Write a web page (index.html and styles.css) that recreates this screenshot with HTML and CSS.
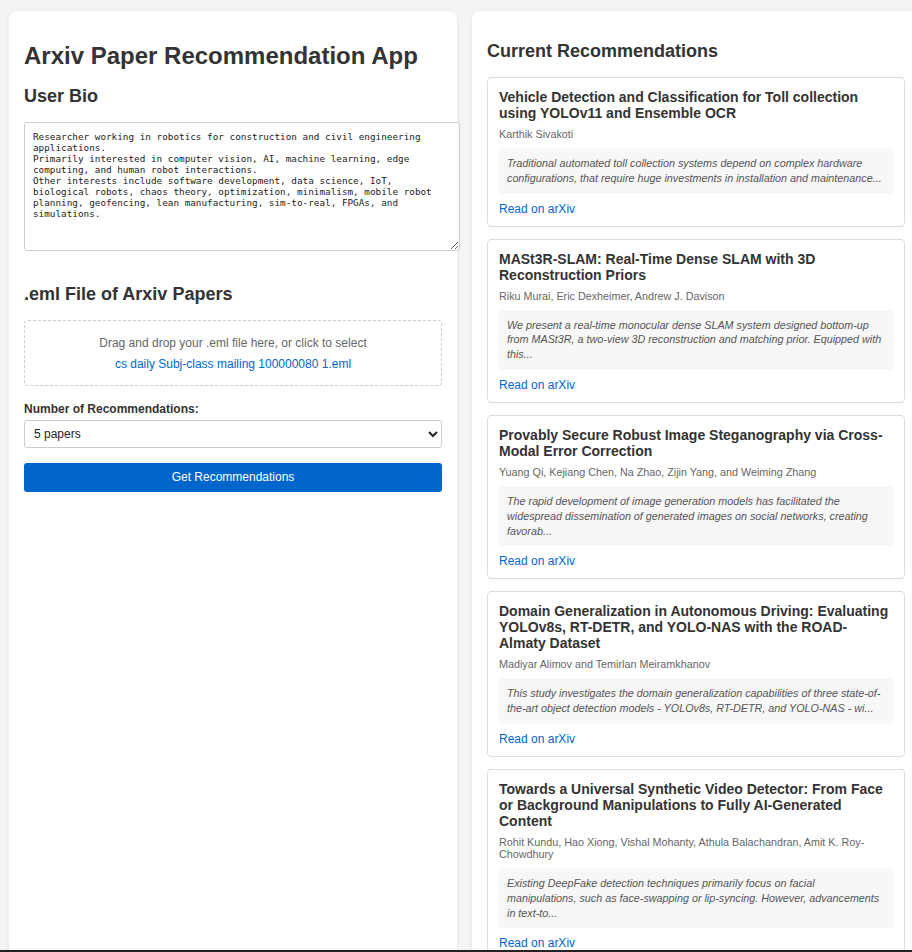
FILE: index.html
```html
<!DOCTYPE html>
<html lang="en">
<head>
<meta charset="utf-8">
<title>Arxiv Paper Recommendation App</title>
<link rel="stylesheet" href="styles.css">
</head>
<body>
<div class="app">
  <section class="panel">
    <h1 class="app-title">Arxiv Paper Recommendation App</h1>
    <h2 class="section-title">User Bio</h2>
    <textarea class="bio" spellcheck="false">Researcher working in robotics for construction and civil engineering applications.
Primarily interested in computer vision, AI, machine learning, edge computing, and human robot interactions.
Other interests include software development, data science, IoT, biological robots, chaos theory, optimization, minimalism, mobile robot planning, geofencing, lean manufacturing, sim-to-real, FPGAs, and simulations.</textarea>
    <h2 class="section-title">.eml File of Arxiv Papers</h2>
    <div class="dropzone">
      <p class="drop-hint">Drag and drop your .eml file here, or click to select</p>
      <p class="drop-file">cs daily Subj-class mailing 100000080 1.eml</p>
    </div>
    <label class="field-label" for="count">Number of Recommendations:</label>
    <select class="select" id="count">
      <option>5 papers</option>
      <option>10 papers</option>
      <option>15 papers</option>
    </select>
    <button class="btn" type="button">Get Recommendations</button>
  </section>

  <section class="panel">
    <h2 class="section-title">Current Recommendations</h2>
    <div class="rec-list">
      <article class="paper">
        <h3 class="paper-title">Vehicle Detection and Classification for Toll collection using YOLOv11 and Ensemble OCR</h3>
        <p class="paper-authors">Karthik Sivakoti</p>
        <p class="paper-abstract">Traditional automated toll collection systems depend on complex hardware configurations, that require huge investments in installation and maintenance...</p>
        <a class="paper-link" href="#">Read on arXiv</a>
      </article>
      <article class="paper">
        <h3 class="paper-title">MASt3R-SLAM: Real-Time Dense SLAM with 3D Reconstruction Priors</h3>
        <p class="paper-authors">Riku Murai, Eric Dexheimer, Andrew J. Davison</p>
        <p class="paper-abstract">We present a real-time monocular dense SLAM system designed bottom-up from MASt3R, a two-view 3D reconstruction and matching prior. Equipped with this...</p>
        <a class="paper-link" href="#">Read on arXiv</a>
      </article>
      <article class="paper">
        <h3 class="paper-title">Provably Secure Robust Image Steganography via Cross-Modal Error Correction</h3>
        <p class="paper-authors">Yuang Qi, Kejiang Chen, Na Zhao, Zijin Yang, and Weiming Zhang</p>
        <p class="paper-abstract">The rapid development of image generation models has facilitated the widespread dissemination of generated images on social networks, creating favorab...</p>
        <a class="paper-link" href="#">Read on arXiv</a>
      </article>
      <article class="paper">
        <h3 class="paper-title">Domain Generalization in Autonomous Driving: Evaluating YOLOv8s, RT-DETR, and YOLO-NAS with the ROAD-Almaty Dataset</h3>
        <p class="paper-authors">Madiyar Alimov and Temirlan Meiramkhanov</p>
        <p class="paper-abstract">This study investigates the domain generalization capabilities of three state-of-the-art object detection models - YOLOv8s, RT-DETR, and YOLO-NAS - wi...</p>
        <a class="paper-link" href="#">Read on arXiv</a>
      </article>
      <article class="paper">
        <h3 class="paper-title">Towards a Universal Synthetic Video Detector: From Face or Background Manipulations to Fully AI-Generated Content</h3>
        <p class="paper-authors">Rohit Kundu, Hao Xiong, Vishal Mohanty, Athula Balachandran, Amit K. Roy-Chowdhury</p>
        <p class="paper-abstract">Existing DeepFake detection techniques primarily focus on facial manipulations, such as face-swapping or lip-syncing. However, advancements in text-to...</p>
        <a class="paper-link" href="#">Read on arXiv</a>
      </article>
    </div>
  </section>
</div>
<div class="screen-edge"></div>
</body>
</html>
```

FILE: styles.css
```css
html {
  overflow: hidden;
}

body {
  margin: 0;
  background: #f4f4f4;
  font-family: "Liberation Sans", Arial, sans-serif;
  color: #333;
}

.app {
  display: grid;
  grid-template-columns: 448px 448px;
  column-gap: 15px;
  padding: 11px 9px;
  width: max-content;
}

.panel {
  background: #fff;
  border-radius: 8px;
  padding: 15px;
  box-shadow: 0 1px 4px rgba(0, 0, 0, 0.08);
  min-width: 0;
}

.app-title {
  font-size: 24px;
  font-weight: bold;
  margin: 16px 0;
  color: #333;
}

.section-title {
  font-size: 18px;
  font-weight: bold;
  margin: 15px 0;
  color: #333;
}

.bio {
  display: block;
  width: 100%;
  height: 111px;
  padding: 8px;
  margin: 0 0 33px;
  border: 1px solid #ccc;
  border-radius: 3px;
  font-family: "DejaVu Sans Mono", monospace;
  font-size: 9.33px;
  line-height: 11px;
  color: #222;
  background: #fff;
  resize: vertical;
}

.dropzone {
  border: 1px dashed #ccc;
  border-radius: 4px;
  padding: 15px 15px 14px;
  text-align: center;
  margin-bottom: 16px;
}

.drop-hint {
  margin: 0;
  font-size: 12px;
  color: #666;
}

.drop-file {
  margin: 7px 0 0;
  font-size: 12px;
  color: #0066cc;
}

.field-label {
  display: block;
  font-size: 12px;
  font-weight: bold;
  color: #333;
  margin-bottom: 4px;
}

.select {
  display: block;
  width: 100%;
  height: 28px;
  padding: 0 5px;
  border: 1px solid #ccc;
  border-radius: 3px;
  background: #fff;
  font-family: "Liberation Sans", Arial, sans-serif;
  font-size: 12px;
  color: #222;
  margin-bottom: 15px;
}

.btn {
  display: block;
  width: 100%;
  padding: 7px 0;
  line-height: 15px;
  border: none;
  border-radius: 3px;
  background: #0066cc;
  color: #fff;
  font-family: "Liberation Sans", Arial, sans-serif;
  font-size: 12px;
}

.rec-list {
  display: flex;
  flex-direction: column;
  gap: 12px;
}

.paper {
  border: 1px solid #ddd;
  border-radius: 4px;
  padding: 11px 11px 10px;
}

.paper-title {
  margin: 0 0 7px;
  font-size: 14px;
  font-weight: bold;
  color: #333;
}

.paper-authors {
  margin: 0 0 8px;
  font-size: 10.78px;
  color: #666;
}

.paper-abstract {
  margin: 0 0 8px;
  padding: 8px;
  background: #f7f7f7;
  border-radius: 4px;
  font-size: 10.78px;
  line-height: 14.8px;
  font-style: italic;
  color: #555;
}

.paper-link {
  display: block;
  font-size: 12px;
  color: #0066cc;
  text-decoration: none;
}

.screen-edge {
  position: fixed;
  left: 0;
  right: 0;
  bottom: 0;
  height: 2px;
  background: #222;
}
```
